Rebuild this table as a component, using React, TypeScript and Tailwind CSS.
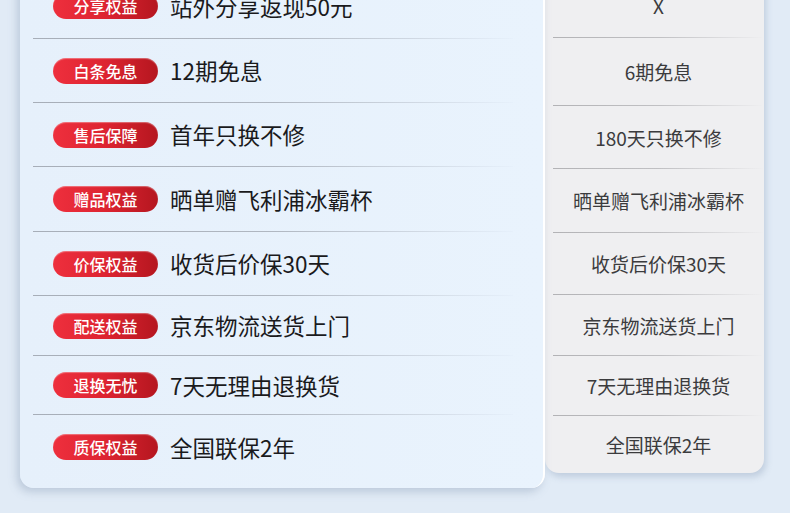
const leftRows = [
  { tag: "分享权益", text: "站外分享返现50元", h: "h-[64px]" },
  { tag: "白条免息", text: "12期免息", h: "h-[63px]" },
  { tag: "售后保障", text: "首年只换不修", h: "h-[63px]" },
  { tag: "赠品权益", text: "晒单赠飞利浦冰霸杯", h: "h-[64px]" },
  { tag: "价保权益", text: "收货后价保30天", h: "h-[63px]" },
  { tag: "配送权益", text: "京东物流送货上门", h: "h-[59px]" },
  { tag: "退换无忧", text: "7天无理由退换货", h: "h-[58px]" },
  { tag: "质保权益", text: "全国联保2年", h: "h-[64px]" },
];

const rightRows = [
  { text: "X", h: "h-[63px]" },
  { text: "6期免息", h: "h-[67px]" },
  { text: "180天只换不修", h: "h-[62px]" },
  { text: "晒单赠飞利浦冰霸杯", h: "h-[63px]" },
  { text: "收货后价保30天", h: "h-[61px]" },
  { text: "京东物流送货上门", h: "h-[60px]" },
  { text: "7天无理由退换货", h: "h-[59px]" },
  { text: "全国联保2年", h: "h-[57px]" },
];

function Divider({ className }: { className: string }) {
  return <div className={`h-px ${className}`} />;
}

export default function App() {
  return (
    <div
      className="h-[513px] w-[790px] overflow-hidden bg-[#e1ebf6]"
      style={{ fontFamily: '"Noto Sans CJK SC", "Noto Sans", sans-serif' }}
    >
      <div className="-mt-[26px] flex items-start pl-[20px]">
        <div className="relative z-10 w-[525px] rounded-b-[14px] border-r-2 border-white bg-gradient-to-r from-[#e6f0fb] to-[#e9f3fd] pb-[9px] shadow-[-3px_4px_8px_rgba(120,140,170,0.35)]">
          {leftRows.map((row, i) => (
            <div key={row.tag}>
              {i > 0 && (
                <Divider className="ml-[13px] mr-[30px] bg-gradient-to-r from-[#a7aeb8] via-[#b0b7c1] to-[#e6f0fb]" />
              )}
              <div className={`flex items-center ${row.h}`}>
                <span className="ml-[33px] flex h-[26px] w-[105px] items-center justify-center rounded-full bg-gradient-to-r from-[#ee2f3d] via-[#dd2431] to-[#b5161f] text-[16px] font-medium leading-none text-white shadow-[inset_0_1px_1px_rgba(255,255,255,0.35)]">
                  {row.tag}
                </span>
                <span className="ml-[12px] text-[22.5px] leading-none text-[#1a1a1c]">
                  {row.text}
                </span>
              </div>
            </div>
          ))}
        </div>
        <div className="w-[219px] rounded-b-[14px] bg-[#efeff1] pl-[8px] shadow-[2px_4px_6px_rgba(120,140,170,0.3)]">
          {rightRows.map((row, i) => (
            <div key={row.text}>
              {i > 0 && (
                <Divider className="bg-gradient-to-r from-[#b3b3b6] via-[#c0c0c3] to-[#efeff1]" />
              )}
              <div
                className={`flex items-center justify-center text-[19px] leading-none text-[#3b3b3d] ${row.h}`}
              >
                {row.text}
              </div>
            </div>
          ))}
        </div>
      </div>
    </div>
  );
}
